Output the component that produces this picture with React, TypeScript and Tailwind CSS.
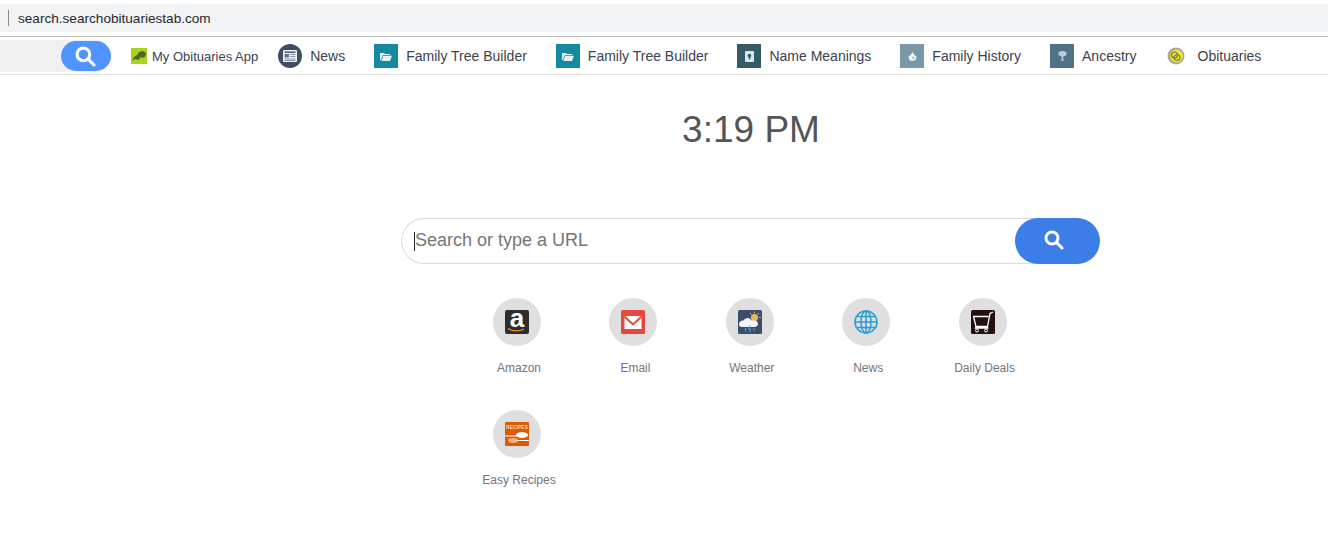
const font = { fontFamily: '"Liberation Sans", Arial, sans-serif' };

function SearchGlyph({ size, stroke = 3 }: { size: number; stroke?: number }) {
  return (
    <svg width={size} height={size} viewBox="0 0 20 20" fill="none" stroke="#fff" strokeWidth={stroke} strokeLinecap="round">
      <circle cx="8" cy="8" r="6" />
      <path d="M12.6 12.6 18 18" />
    </svg>
  );
}

function Tile({ color, children }: { color: string; children: React.ReactNode }) {
  return (
    <div className="w-6 h-6 flex items-center justify-center" style={{ background: color }}>
      {children}
    </div>
  );
}

const FolderIcon = () => (
  <svg width="12" height="9" viewBox="0 0 12 9">
    <path d="M0 1h4l1 1h5v1H3L1 8H0z" fill="#dfeef2" />
    <path d="M3.4 3.8H12L10 9H1.3z" fill="#e8f2f4" />
  </svg>
);

function NavItem({ icon, label, className }: { icon: React.ReactNode; label: string; className: string }) {
  return (
    <div className={`flex items-center shrink-0 ${className}`}>
      {icon}
      <span className="ml-2 text-[14px] leading-none text-[#3c4250] whitespace-nowrap">{label}</span>
    </div>
  );
}

function Shortcut({ label, children }: { label: string; children: React.ReactNode }) {
  return (
    <div className="w-[116.4px] h-[112px] flex flex-col items-center">
      <div className="w-12 h-12 mr-1 rounded-full bg-[#dfdfdf] flex items-center justify-center">{children}</div>
      <span className="mt-[15px] text-[12px] leading-[14px] text-[#75757a] whitespace-nowrap">{label}</span>
    </div>
  );
}

export default function App() {
  return (
    <div className="w-[1328px] h-[533px] bg-white overflow-hidden" style={font}>
      <div className="pt-1 h-8">
        <div className="h-7 bg-[#f1f3f4] flex items-center pl-2">
          <div className="w-px h-4 bg-[#8a8a8a]" />
          <span className="ml-[9px] mt-[2px] text-[13.6px] text-[#27292e]">search.searchobituariestab.com</span>
        </div>
      </div>
      <div className="mt-1 border-t border-[#bdbdbd]">
        <div className="h-[38px] border-b border-[#e3e3e3] flex items-start pt-[3px]">
          <div className="h-8 w-[111px] bg-[#f1f1f1] shrink-0 flex justify-end items-center rounded-r-[15px]">
            <div className="w-[50px] h-[30px] rounded-[15px] bg-[#4f94ff] flex items-center justify-center pr-[2px]">
              <SearchGlyph size={21} />
            </div>
          </div>
          <div className="flex items-center ml-5 shrink-0 h-8">
            <svg width="16" height="16" viewBox="0 0 16 16">
              <rect width="16" height="16" fill="#a8d51e" />
              <path d="M1 13 3 9l3-2 2-3 4-1 3 2-1 4-3 1-2-1-1 3-4-1z" fill="#56632a" />
            </svg>
            <span className="ml-[5px] text-[13px] leading-none text-[#3c4250] whitespace-nowrap">My Obituaries App</span>
          </div>
          <NavItem
            className="ml-5 h-8"
            label="News"
            icon={
              <svg width="24" height="24" viewBox="0 0 24 24">
                <circle cx="12" cy="12" r="12" fill="#3f4d66" />
                <rect x="5" y="6" width="14" height="12" rx="1" fill="#f3f4f6" />
                <rect x="6.5" y="7.5" width="11" height="1.4" fill="#3f4d66" />
                <rect x="6.5" y="10" width="4.5" height="3.5" fill="#66728a" />
                <path d="M12 10.5h5.5M12 12.5h5.5M6.5 15h11M6.5 16.5h11" stroke="#8a94a8" strokeWidth="1" />
              </svg>
            }
          />
          <NavItem className="ml-[29px] h-8" label="Family Tree Builder" icon={<Tile color="#138a9e"><FolderIcon /></Tile>} />
          <NavItem className="ml-[29px] h-8" label="Family Tree Builder" icon={<Tile color="#138a9e"><FolderIcon /></Tile>} />
          <NavItem
            className="ml-[29px] h-8"
            label="Name Meanings"
            icon={
              <Tile color="#345c66">
                <svg width="9" height="11" viewBox="0 0 10 12">
                  <rect width="10" height="12" rx="1" fill="#dbe6e9" />
                  <circle cx="5" cy="5" r="2" fill="#345c66" />
                  <rect x="4" y="6" width="2" height="3" fill="#345c66" />
                </svg>
              </Tile>
            }
          />
          <NavItem
            className="ml-[29px] h-8"
            label="Family History"
            icon={
              <Tile color="#7b98a8">
                <svg width="9" height="9" viewBox="0 0 10 10">
                  <path d="M5 0 7 3 9.5 5 8.5 9 5 10 1.5 9 .5 5 3 3z" fill="#f2f5f7" />
                  <circle cx="6" cy="6.5" r="1.4" fill="#a9bcc7" />
                </svg>
              </Tile>
            }
          />
          <NavItem
            className="ml-[29px] h-8"
            label="Ancestry"
            icon={
              <Tile color="#4f7286">
                <svg width="9" height="10" viewBox="0 0 10 11">
                  <ellipse cx="5" cy="3" rx="4.6" ry="3" fill="#b9cbd5" />
                  <path d="M4.2 5h1.600l.4 6H3.800z" fill="#b9cbd5" />
                </svg>
              </Tile>
            }
          />
          <NavItem
            className="ml-[29px] h-8"
            label="Obituaries"
            icon={
              <div className="w-6 h-6 pr-1 flex items-center justify-center">
                <svg width="18" height="18" viewBox="0 0 18 18" className="shrink-0">
                  <circle cx="9" cy="9" r="8.5" fill="#a9a78f" />
                  <circle cx="9.5" cy="9" r="6.500" fill="#ece72f" />
                  <circle cx="7.5" cy="8" r="3" fill="none" stroke="#77793a" strokeWidth="1.2" />
                  <circle cx="10" cy="10.5" r="3" fill="none" stroke="#77793a" strokeWidth="1.2" />
                </svg>
              </div>
            }
          />
        </div>
      </div>

      <div className="flex flex-col items-center">
        <div className="mt-[35px] ml-[174px] h-10 text-[37px] leading-10 text-[#555]">3:19 PM</div>
        <div className="mt-[68px] ml-[173px] w-[699px] h-[46px] flex">
          <div className="flex-1 h-full border border-r-0 border-[#dcdcdc] rounded-l-[23px] flex items-center pl-3">
            <div className="w-px h-[19px] bg-[#222]" />
            <span className="text-[18px] leading-none text-[#757575] -mt-0.5">Search or type a URL</span>
          </div>
          <div className="w-[85px] h-full -ml-[24px] shrink-0 rounded-[23px] bg-[#3b7ee8] flex items-center justify-center pr-2 pb-0.5">
            <SearchGlyph size={20} />
          </div>
        </div>
      </div>

      <div className="mt-[34px] ml-[460.8px] w-[583px] flex flex-wrap">
        <Shortcut label="Amazon">
          <svg width="24" height="24" viewBox="0 0 24 24" className="overflow-visible">
            <rect width="24" height="24" rx="2" fill="#2d2d2d" />
            <text x="12" y="17" textAnchor="middle" fontSize="26" fontWeight="700" fill="#fff" fontFamily="Liberation Sans">a</text>
            <path d="M3 18.5c5 3 11 3 16 .5" stroke="#e79a1c" strokeWidth="1.3" fill="none" />
          </svg>
        </Shortcut>
        <Shortcut label="Email">
          <svg width="24" height="24" viewBox="0 0 24 24">
            <rect width="24" height="24" rx="1.5" fill="#e5493d" />
            <path d="M3.500 6h17v13h-17z" fill="#fff" />
            <path d="M3.500 6.500 12 14.500 20.500 6.500" fill="none" stroke="#e5493d" strokeWidth="2" />
          </svg>
        </Shortcut>
        <Shortcut label="Weather">
          <svg width="24" height="24" viewBox="0 0 24 24">
            <rect width="24" height="24" rx="1.5" fill="#3d4c68" />
            <circle cx="16.500" cy="7.500" r="3.600" fill="#e9b64a" />
            <path d="M16.500 1.500v2M21 3 19.500 4.500M23 7.500h-2M12 3 13.500 4.500" stroke="#e9b64a" strokeWidth="1" />
            <path d="M1 14.500c0-3 2.500-4.500 4.500-4C7 7 12.500 7 13.500 10.500c2.500-1 6.500 0 6.500 3 0 2-1.500 3.500-3.500 3.500H4c-2 0-3-1-3-2.500z" fill="#f2f5f8" />
            <path d="M12 15 10.500 19H12.500L12 22.500M7.500 18v3M16 18v3" stroke="#37b3e6" strokeWidth="1" fill="none" />
          </svg>
        </Shortcut>
        <Shortcut label="News">
          <svg width="24" height="24" viewBox="0 0 24 24" fill="none" stroke="#2b9cd8" strokeWidth="1.5">
            <circle cx="12" cy="12" r="11" />
            <ellipse cx="12" cy="12" rx="5" ry="11" />
            <path d="M12 1v22M1 12h22M3 6.500h18M3 17.500h18" />
          </svg>
        </Shortcut>
        <Shortcut label="Daily Deals">
          <svg width="24" height="24" viewBox="0 0 24 24">
            <rect width="24" height="24" rx="1.5" fill="#24100e" />
            <path d="M2 6.500h15.500M2.500 6.500l2.500 10h11.500l2.500-13 3-1.500M5 16.500l-.5 1.500h13" fill="none" stroke="#fff" strokeWidth="1.300" />
            <circle cx="6" cy="20.500" r="1.500" fill="none" stroke="#fff" />
            <circle cx="15" cy="20.500" r="1.500" fill="none" stroke="#fff" />
          </svg>
        </Shortcut>
        <Shortcut label="Easy Recipes">
          <svg width="24" height="24" viewBox="0 0 24 24">
            <rect width="24" height="24" rx="1" fill="#dd5a00" />
            <text x="12" y="7" textAnchor="middle" fontSize="5" fontWeight="700" fill="#f8d9bf" fontFamily="Liberation Sans">RECIPES</text>
            <ellipse cx="17" cy="13" rx="6" ry="3" fill="#fff" />
            <path d="M0 14h12" stroke="#fff" strokeWidth="1" />
            <ellipse cx="8" cy="18.500" rx="5" ry="2.500" fill="#f6b183" />
            <path d="M12 18.500h12" stroke="#fff" strokeWidth="1" />
          </svg>
        </Shortcut>
      </div>
    </div>
  );
}
